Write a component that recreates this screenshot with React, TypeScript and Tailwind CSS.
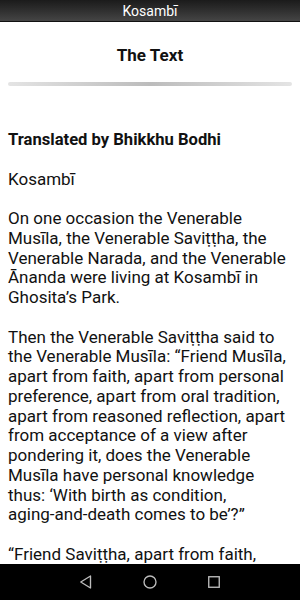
import React from 'react'

const App = () => {
  return (
    <div
      className="h-[600px] w-[300px] flex flex-col overflow-hidden bg-white"
      style={{fontFamily: 'Roboto, "Liberation Sans", sans-serif'}}>
      {/* title bar */}
      <div className="h-[22px] flex items-center justify-center bg-linear-to-b from-[#1b1b1b] to-[#454545] border-b border-[#111] text-white text-[14px] leading-none">
        Kosambī
      </div>

      <div className="flex-1 overflow-hidden text-[#111]">
        <h1 className="mt-[22px] h-[22px] leading-[22px] text-center text-[17px] font-bold">The Text</h1>
        <div className="mx-2 mt-[16px] h-[4px] rounded-full bg-linear-to-r from-[#e4e4e4] via-[#bcbcbc] to-[#e4e4e4]" />

        <div className="pl-2 pr-[14px] mt-[44px] text-[17px] leading-[19.75px]">
          <p className="mb-[19.75px] font-bold text-[16.6px]">Translated by Bhikkhu Bodhi</p>
          <p className="mb-[19.75px]">Kosambī</p>
          <p className="mb-[19.75px]">
            On one occasion the Venerable Musīla, the Venerable Saviṭṭha, the Venerable Narada, and the
            Venerable Ānanda were living at Kosambī in Ghosita’s Park.
          </p>
          <p className="mb-[19.75px]">
            Then the Venerable Saviṭṭha said to the Venerable Musīla: “Friend Musīla, apart from faith, apart
            from personal preference, apart from oral tradition, apart from reasoned reflection, apart from
            acceptance of a view after pondering it, does the Venerable Musīla have personal knowledge thus:
            ‘With birth as condition, <span className="whitespace-nowrap">aging-and-death</span> comes to be’?”
          </p>
          <p className="mb-[19.75px]">
            “Friend Saviṭṭha, apart from faith, apart from personal preference, apart from oral tradition, apart
            from reasoned reflection, apart from acceptance of a view after pondering it, I know this, I see
            this: ‘With birth as condition, <span className="whitespace-nowrap">aging-and-death</span> comes to
            be.’”
          </p>
        </div>
      </div>

      {/* nav bar */}
      <div className="h-[36px] bg-black flex items-center justify-center gap-[46px]">
        <svg width="18" height="18" viewBox="0 0 24 24" fill="none" stroke="#bdbdbd" strokeWidth="1.8" strokeLinejoin="round">
          <path d="M18 4 L5 12 L18 20 Z" />
        </svg>
        <svg width="18" height="18" viewBox="0 0 24 24" fill="none" stroke="#bdbdbd" strokeWidth="1.8">
          <circle cx="12" cy="12" r="8" />
        </svg>
        <svg width="18" height="18" viewBox="0 0 24 24" fill="none" stroke="#bdbdbd" strokeWidth="1.8">
          <rect x="5" y="5" width="14" height="14" />
        </svg>
      </div>
    </div>
  )
}

export default App
